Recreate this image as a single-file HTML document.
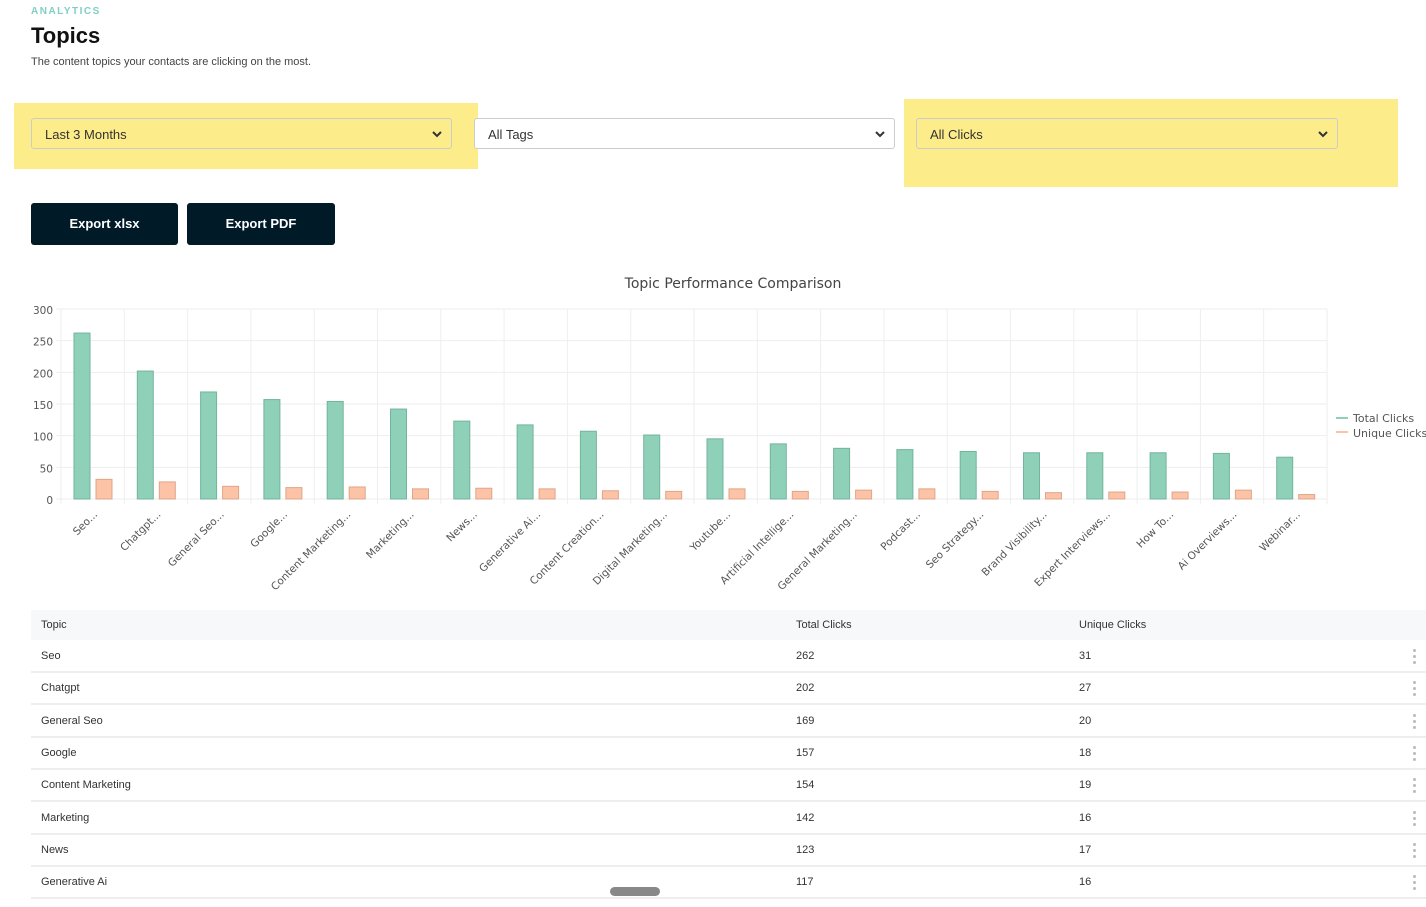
<!DOCTYPE html>
<html><head><meta charset="utf-8"><style>
body{margin:0;width:1426px;height:907px;overflow:hidden;background:#fff;font-family:"Liberation Sans",sans-serif;color:#333;position:relative}
.a{position:absolute}
.sel{position:absolute;height:31px;border:1px solid #ccc;border-radius:3px;font-size:13px;color:#333;line-height:31px;padding-left:13px;box-sizing:border-box;background:transparent}
.sel svg{position:absolute;right:8px;top:10px}
.btn{position:absolute;top:203px;height:42px;background:#001a28;color:#fff;font-weight:bold;font-size:13px;text-align:center;line-height:42px;border-radius:3px}
.row{position:absolute;left:31px;width:1395px;height:30px;border-bottom:2px solid #eee;font-size:11px;color:#333;line-height:31px}
.row span{position:absolute}
.dots{position:absolute;left:1382px;top:8px;width:3px}
.dots i{display:block;width:3px;height:3px;border-radius:50%;background:#bbb;margin-bottom:3px}
</style></head><body>
<div class="a" style="left:31px;top:6px;font-size:10px;letter-spacing:1.5px;color:#7fcfc4;font-weight:bold">ANALYTICS</div>
<div class="a" style="left:31px;top:23px;font-size:22px;font-weight:bold;color:#111">Topics</div>
<div class="a" style="left:31px;top:56px;font-size:11px;color:#444">The content topics your contacts are clicking on the most.</div>
<div class="a" style="left:14px;top:103px;width:464px;height:66px;background:#fdec8a"></div>
<div class="a" style="left:904px;top:99px;width:494px;height:88px;background:#fdec8a"></div>
<div class="sel" style="left:31px;top:118px;width:421px">Last 3 Months<svg width="12" height="10"><path d="M2 3l4 4 4-4" stroke="#333" stroke-width="2" fill="none"/></svg></div>
<div class="sel" style="left:474px;top:118px;width:421px;background:#fff">All Tags<svg width="12" height="10"><path d="M2 3l4 4 4-4" stroke="#333" stroke-width="2" fill="none"/></svg></div>
<div class="sel" style="left:916px;top:118px;width:422px">All Clicks<svg width="12" height="10"><path d="M2 3l4 4 4-4" stroke="#333" stroke-width="2" fill="none"/></svg></div>
<div class="btn" style="left:31px;width:147px">Export xlsx</div>
<div class="btn" style="left:187px;width:148px">Export PDF</div>
<svg class="a" style="left:0;top:270px" width="1426" height="330" id="ch"></svg>
<div class="a" style="left:31px;top:610px;width:1395px;height:30px;background:#f7f8fa;font-size:11px;line-height:31px;color:#333"><span class="a" style="left:10px">Topic</span><span class="a" style="left:765px">Total Clicks</span><span class="a" style="left:1048px">Unique Clicks</span></div>
<div id="rows"></div>
<div class="a" style="left:610px;top:887px;width:50px;height:9px;border-radius:5px;background:#888"></div>
<script>
var names=["Seo","Chatgpt","General Seo","Google","Content Marketing","Marketing","News","Generative Ai","Content Creation","Digital Marketing","Youtube","Artificial Intellige","General Marketing","Podcast","Seo Strategy","Brand Visibility","Expert Interviews","How To","Ai Overviews","Webinar"];
var t=[262,202,169,157,154,142,123,117,107,101,95,87,80,78,75,73,73,73,72,66];
var u=[31,27,20,18,19,16,17,16,13,12,16,12,14,16,12,10,11,11,14,7];
var s='<text x="733" y="18" font-size="14" fill="#444" text-anchor="middle" font-family="DejaVu Sans,sans-serif">Topic Performance Comparison</text>';
var y0=229,k=190/300,x0=61,w=63.3;
for(var i=0;i<=6;i++){var y=y0-i*50*k;s+='<line x1="56" x2="1327" y1="'+y+'" y2="'+y+'" stroke="#eee"/><text x="53" y="'+(y+5)+'" font-size="10.5" fill="#555" text-anchor="end" font-family="DejaVu Sans,sans-serif">'+i*50+'</text>';}
for(var i=0;i<=20;i++){var x=x0+i*w;s+='<line x1="'+x+'" x2="'+x+'" y1="39" y2="'+(y0+5)+'" stroke="#eee"/>';}
for(var i=0;i<20;i++){var x=x0+i*w;
s+='<rect x="'+(x+13)+'" y="'+(y0-t[i]*k)+'" width="16" height="'+t[i]*k+'" fill="#8fd0b8" stroke="#72b59c"/>';
s+='<rect x="'+(x+35)+'" y="'+(y0-u[i]*k)+'" width="16" height="'+u[i]*k+'" fill="#fcc3a6" stroke="#e0a588"/>';
s+='<text transform="translate('+(x+37)+','+(y0+16)+') rotate(-45)" font-size="10.5" fill="#555" text-anchor="end" font-family="DejaVu Sans,sans-serif">'+names[i]+'...</text>';}
s+='<line x1="1336" x2="1348" y1="148" y2="148" stroke="#8fd0b8" stroke-width="2"/><text x="1353" y="152" font-size="11" fill="#555" font-family="DejaVu Sans,sans-serif">Total Clicks</text>';
s+='<line x1="1336" x2="1348" y1="162" y2="162" stroke="#fcc3a6" stroke-width="2"/><text x="1353" y="167" font-size="11" fill="#555" font-family="DejaVu Sans,sans-serif">Unique Clicks</text>';
document.getElementById('ch').innerHTML=s;
var r='';for(var i=0;i<8;i++){r+='<div class="row" style="top:'+(641+i*32.3)+'px"><span style="left:10px">'+names[i]+'</span><span style="left:765px">'+t[i]+'</span><span style="left:1048px">'+u[i]+'</span><div class="dots"><i></i><i></i><i></i></div></div>';}
document.getElementById('rows').innerHTML=r;
</script>
</body></html>
